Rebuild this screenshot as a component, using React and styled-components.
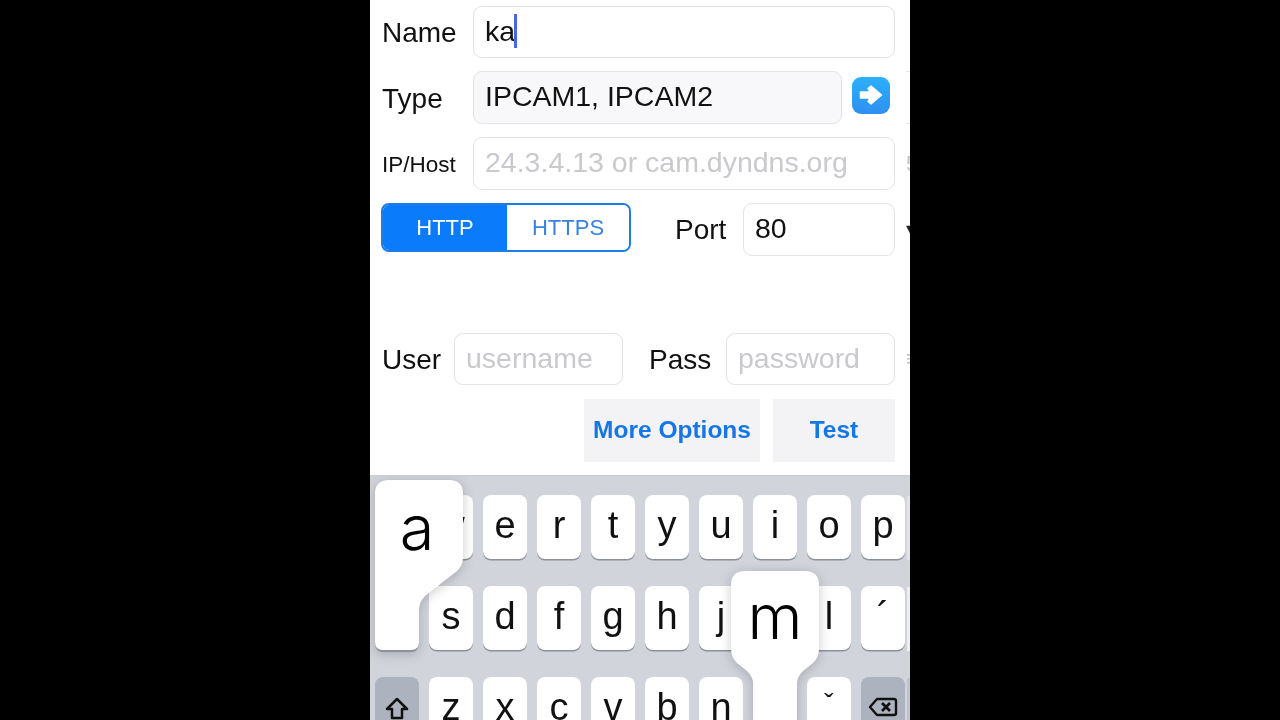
import React from "react";
import styled, { createGlobalStyle } from "styled-components";

const GlobalStyle = createGlobalStyle`
  html, body {
    margin: 0;
    height: 100%;
    background: #000;
    overflow: hidden;
    font-family: "Liberation Sans", Arial, sans-serif;
  }
  * { box-sizing: border-box; }
`;

const Screen = styled.div`
  width: 540px;
  height: 720px;
  margin: 0 auto;
  background: #fff;
  display: flex;
  flex-direction: column;
  overflow: hidden;
  filter: blur(0.4px);
`;

const Form = styled.div`
  height: 475px;
  padding-top: 6px;
  display: flex;
  flex-direction: column;
  gap: 13px;
`;

const Row = styled.div`
  display: flex;
  align-items: center;
  height: ${(p) => p.$h || 53}px;
  padding-left: 12px;
  margin-top: ${(p) => p.$top || 0}px;
`;

const Label = styled.div`
  width: ${(p) => p.$w}px;
  flex: none;
  font-size: ${(p) => p.$size || 28}px;
  color: #111;
  margin-left: ${(p) => p.$left || 0}px;
  padding-top: ${(p) => p.$drop ?? 2}px;
`;

const Field = styled.div`
  width: ${(p) => p.$w}px;
  height: 100%;
  flex: none;
  display: flex;
  align-items: center;
  padding: 0 0 2px 11px;
  border: 1.5px solid #e3e3e7;
  border-radius: 9px;
  background: ${(p) => (p.$filled ? "#f8f8fa" : "#fff")};
  font-size: 28.5px;
  color: ${(p) => (p.$hint ? "#c9c9ce" : "#111")};
  white-space: nowrap;
`;

const Caret = styled.span`
  width: 3px;
  height: 34px;
  margin-left: -1px;
  background: #4a66d8;
`;

const GoButton = styled.div`
  width: 38px;
  height: 37px;
  margin-left: 10px;
  margin-bottom: 5px;
  flex: none;
  border-radius: 9px;
  background: linear-gradient(#2bb0fb, #2f8ff0);
  display: flex;
  align-items: center;
  justify-content: center;
`;

// bits of the next page peeking in at the right edge
const Sliver = styled.div`
  width: 4px;
  height: 100%;
  margin-left: ${(p) => p.$gap}px;
  flex: none;
  overflow: hidden;
  display: flex;
  align-items: center;
  font-size: 22px;
  color: ${(p) => p.$color || "#c4c4c8"};
  border-top: ${(p) => (p.$framed ? "1.5px solid #e6e6ea" : "none")};
  border-bottom: ${(p) => (p.$framed ? "1.5px solid #e6e6ea" : "none")};
`;

const Segments = styled.div`
  width: 250px;
  height: 49px;
  margin-bottom: 4px;
  flex: none;
  margin-left: -1px;
  display: flex;
  border: 2px solid #1a7de8;
  border-radius: 8px;
  overflow: hidden;
`;

const Segment = styled.div`
  flex: ${(p) => (p.$on ? "0 0 124px" : 1)};
  display: flex;
  align-items: center;
  justify-content: center;
  font-size: 22px;
  background: ${(p) => (p.$on ? "#0a7bfb" : "#fff")};
  color: ${(p) => (p.$on ? "#fff" : "#3a82e0")};
`;

const Actions = styled.div`
  display: flex;
  justify-content: flex-end;
  gap: 13px;
  height: 63px;
  padding-right: 15px;
  margin-top: 1px;
`;

const ActionButton = styled.div`
  width: ${(p) => p.$w}px;
  padding-bottom: 1px;
  background: #f3f3f5;
  color: #1577e5;
  font-size: 24.5px;
  font-weight: bold;
  display: flex;
  align-items: center;
  justify-content: center;
`;

const Keyboard = styled.div`
  position: relative;
  flex: 1;
  min-height: 0;
  overflow: hidden;
  padding: 19px 0 0 5px;
  background: #d1d4db;
  border-top: 1px solid #c9cad0;
`;

const KeyGrid = styled.div`
  display: grid;
  grid-template-columns: repeat(10, 44px);
  grid-auto-rows: 64px;
  gap: 27px 10px;
`;

const Key = styled.div`
  display: flex;
  justify-content: center;
  border-radius: 8px;
  background: ${(p) => (p.$dark ? "#adb3be" : "#fff")};
  box-shadow: 0 1.5px 0 #8b9099;
  font-size: ${(p) => (p.$fine ? 28 : 38)}px;
  line-height: ${(p) => (p.$fine ? 53 : 60)}px;
  color: #111;
`;

const KeyIcon = styled.svg`
  margin-top: 20px;
  flex: none;
`;

const Popup = styled.div`
  position: absolute;
  left: ${(p) => p.$x}px;
  top: ${(p) => p.$y}px;
  width: 88px;
  filter: drop-shadow(0 2px 6px rgba(0, 0, 0, 0.2));
`;

const PopupShape = styled.svg`
  display: block;
`;

const PopupGlyph = styled.div`
  position: absolute;
  top: ${(p) => p.$top}px;
  left: ${(p) => p.$left || 0}px;
  width: 100%;
  text-align: center;
  font-size: 63px;
  line-height: 80px;
  font-family: Inter, "Liberation Sans", sans-serif;
  font-weight: 300;
  color: #000;
`;

const EdgeKey = styled.div`
  position: absolute;
  right: 0;
  top: ${(p) => p.$top}px;
  height: ${(p) => p.$h}px;
  width: 3px;
  background: ${(p) => p.$bg};
`;

const ROWS = [
  ["q", "w", "e", "r", "t", "y", "u", "i", "o", "p"],
  ["a", "s", "d", "f", "g", "h", "j", "k", "l", "´"],
  ["shift", "z", "x", "c", "v", "b", "n", "m", "ˇ", "delete"],
];

function ShiftIcon() {
  return (
    <KeyIcon width="24" height="24" viewBox="0 0 24 24" fill="none" stroke="#111" strokeWidth="2.5" strokeLinejoin="round">
      <path d="M12 2 L22 12 H17 V21 H7 V12 H2 Z" />
    </KeyIcon>
  );
}

function DeleteIcon() {
  return (
    <KeyIcon width="30" height="20" viewBox="0 0 30 20" fill="none" stroke="#111" strokeWidth="2.4" strokeLinejoin="round">
      <path d="M9 2 H26 a2 2 0 0 1 2 2 V16 a2 2 0 0 1 -2 2 H9 L2 10 Z" />
      <path d="M14 6 L22 14 M22 6 L14 14" strokeWidth="2.8" />
    </KeyIcon>
  );
}

function App() {
  return (
    <Screen>
      <GlobalStyle />
      <Form>
        <Row $h={52}>
          <Label $w={91}>Name</Label>
          <Field $w={422}>
            ka
            <Caret />
          </Field>
        </Row>
        <Row>
          <Label $w={91}>Type</Label>
          <Field $w={369} $filled>
            IPCAM1, IPCAM2
          </Field>
          <GoButton>
            <svg width="26" height="22" viewBox="0 0 26 22">
              <path
                d="M12.5 8 L10 4.5 L13 2 L23.5 11 L13 20 L10 17.5 L12.5 14 H2.5 V8 Z"
                fill="#fff"
                stroke="#fff"
                strokeWidth="1.5"
                strokeLinejoin="round"
              />
            </svg>
          </GoButton>
          <Sliver $gap={16} $framed />
        </Row>
        <Row>
          <Label $w={91} $size={22.5}>IP/Host</Label>
          <Field $w={422} $hint>
            24.3.4.13 or cam.dyndns.org
          </Field>
          <Sliver $gap={11}>5</Sliver>
        </Row>
        <Row>
          <Segments>
            <Segment $on>HTTP</Segment>
            <Segment>HTTPS</Segment>
          </Segments>
          <Label $w={68} $left={44} $drop={0}>Port</Label>
          <Field $w={152}>80</Field>
          <Sliver $gap={11} $color="#222">▾</Sliver>
        </Row>
        <Row $h={52} $top={64}>
          <Label $w={72}>User</Label>
          <Field $w={169} $hint>username</Field>
          <Label $w={77} $left={26}>Pass</Label>
          <Field $w={169} $hint>password</Field>
          <Sliver $gap={11}>≡</Sliver>
        </Row>
        <Actions>
          <ActionButton $w={176}>More Options</ActionButton>
          <ActionButton $w={122}>Test</ActionButton>
        </Actions>
      </Form>
      <Keyboard>
        <KeyGrid>
          {ROWS.flat().map((k) => {
            if (k === "shift") {
              return (
                <Key key={k} $dark>
                  <ShiftIcon />
                </Key>
              );
            }
            if (k === "delete") {
              return (
                <Key key={k} $dark>
                  <DeleteIcon />
                </Key>
              );
            }
            return (
              <Key key={k} $fine={k === "ˇ"}>
                {k}
              </Key>
            );
          })}
        </KeyGrid>
        <EdgeKey $top={20} $h={64} $bg="#e2e3e7" />
        <EdgeKey $top={111} $h={64} $bg="#eeeef0" />
        <EdgeKey $top={202} $h={44} $bg="#c0c3cb" />
        <Popup $x={5} $y={4}>
          <PopupShape width="88" height="172" viewBox="0 0 88 172">
            <path d="M0 150 V162 Q0 172 8 172 H36 Q44 172 44 162 V150 Z" fill="#8b9099" />
            <path
              d="M14 0 H74 Q88 0 88 14 V78 Q88 85 82 91 L50 116 Q44 122 44 130 V162 Q44 170 36 170 H8 Q0 170 0 162 V14 Q0 0 14 0 Z"
              fill="#fff"
            />
          </PopupShape>
          <PopupGlyph $top={7} $left={-2}>a</PopupGlyph>
        </Popup>
        <Popup $x={361} $y={95}>
          <PopupShape width="88" height="154" viewBox="0 0 88 154">
            <path
              d="M14 0 H74 Q88 0 88 14 V78 Q88 86 82 92 L72 100 Q66 106 66 112 V154 H22 V112 Q22 106 16 100 L6 92 Q0 86 0 78 V14 Q0 0 14 0 Z"
              fill="#fff"
            />
          </PopupShape>
          <PopupGlyph $top={5}>m</PopupGlyph>
        </Popup>
      </Keyboard>
    </Screen>
  );
}

export default App;
